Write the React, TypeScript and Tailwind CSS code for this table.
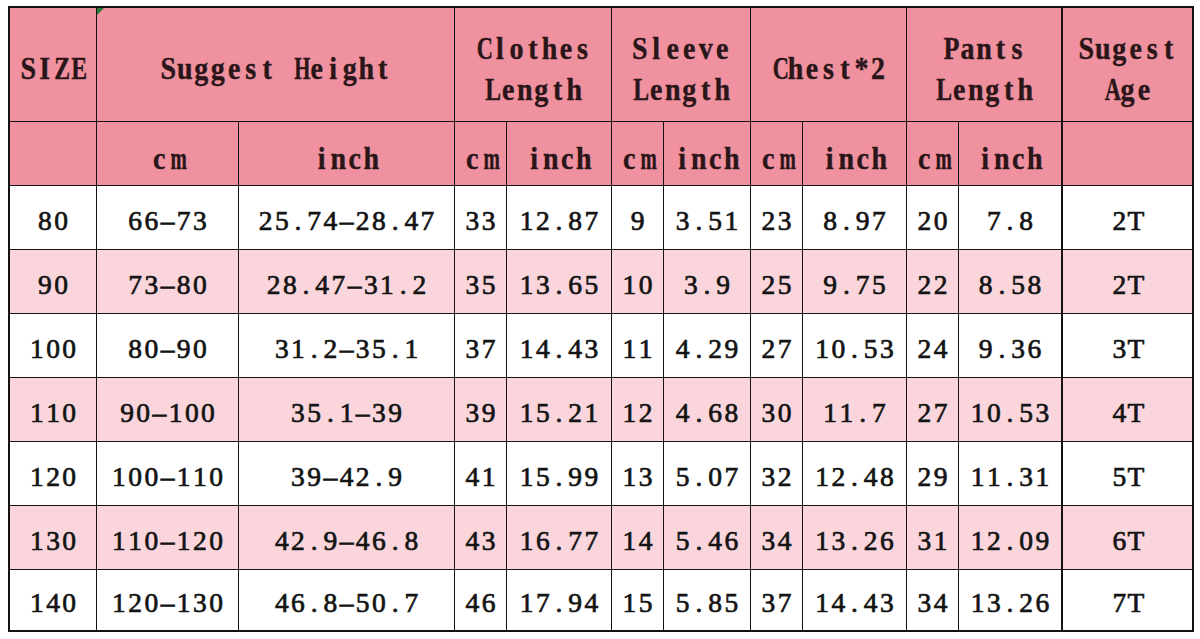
import React from "react";

const rows: string[][] = [
  ["80", "66-73", "25.74-28.47", "33", "12.87", "9", "3.51", "23", "8.97", "20", "7.8", "2T"],
  ["90", "73-80", "28.47-31.2", "35", "13.65", "10", "3.9", "25", "9.75", "22", "8.58", "2T"],
  ["100", "80-90", "31.2-35.1", "37", "14.43", "11", "4.29", "27", "10.53", "24", "9.36", "3T"],
  ["110", "90-100", "35.1-39", "39", "15.21", "12", "4.68", "30", "11.7", "27", "10.53", "4T"],
  ["120", "100-110", "39-42.9", "41", "15.99", "13", "5.07", "32", "12.48", "29", "11.31", "5T"],
  ["130", "110-120", "42.9-46.8", "43", "16.77", "14", "5.46", "34", "13.26", "31", "12.09", "6T"],
  ["140", "120-130", "46.8-50.7", "46", "17.94", "15", "5.85", "37", "14.43", "34", "13.26", "7T"],
];

const squeeze: Record<string, string> = {
  H: "scale-x-[0.74]",
  C: "scale-x-[0.8]",
  L: "scale-x-[0.85]",
  P: "scale-x-[0.93]",
  A: "scale-x-[0.8]",
  Z: "scale-x-[0.85]",
  E: "scale-x-[0.85]",
  m: "scale-x-[0.7]",
};

function Mono({ text, cell, squeezeWide }: { text: string; cell: string; squeezeWide?: boolean }) {
  return (
    <span className="inline-flex">
      {text.split("").map((c, i) => (
        <span
          key={i}
          className={`inline-block text-center ${cell} ${squeezeWide && squeeze[c] ? squeeze[c] : ""}`}
        >
          {c === "-" ? "\u2013" : c === " " ? "\u00a0" : c}
        </span>
      ))}
    </span>
  );
}

function HeadText({ lines }: { lines: string[] }) {
  return (
    <div className="flex flex-col items-center leading-[37px] scale-y-[1.1]">
      {lines.map((l, i) => (
        <Mono key={i} text={l} cell="w-[16.5px]" squeezeWide />
      ))}
    </div>
  );
}

const headBase =
  "bg-[#ef919e] flex items-center justify-center text-[#2a1619] font-bold text-[28px] [font-family:'Liberation_Serif',serif] [-webkit-text-stroke:0.35px_#2a1619]";

export default function App() {
  return (
    <div className="w-[1200px] h-[639px] bg-white overflow-hidden">
      <div className="ml-[8px] mt-[6px] w-fit bg-[#161213] p-[2px] grid gap-px grid-cols-[86px_141px_215px_51px_104px_51px_86px_51px_103px_51px_102px_130px] grid-rows-[113px_63px_63px_63px_63px_63px_63px_63px_60px]">
        {/* header row 1 */}
        <div className={`${headBase} pt-[8px]`}>
          <HeadText lines={["SIZE"]} />
        </div>
        <div className={`${headBase} pt-[8px] col-span-2 relative`}>
          <span className="absolute left-0 top-0 w-0 h-0 border-t-[7px] border-r-[7px] border-t-[#237a3b] border-r-transparent" />
          <HeadText lines={["Suggest Height"]} />
        </div>
        <div className={`${headBase} pt-[8px] col-span-2`}>
          <HeadText lines={["Clothes", "Length"]} />
        </div>
        <div className={`${headBase} pt-[8px] col-span-2`}>
          <HeadText lines={["Sleeve", "Length"]} />
        </div>
        <div className={`${headBase} pt-[8px] col-span-2`}>
          <HeadText lines={["Chest*2"]} />
        </div>
        <div className={`${headBase} pt-[8px] col-span-2`}>
          <HeadText lines={["Pants", "Length"]} />
        </div>
        <div className={`${headBase} pt-[8px] border-l border-[#161213]`}>
          <HeadText lines={["Sugest", "Age"]} />
        </div>

        {/* header row 2 */}
        <div className={headBase} />
        {["cm", "inch", "cm", "inch", "cm", "inch", "cm", "inch", "cm", "inch"].map((t, i) => (
          <div key={i} className={`${headBase} pt-[10px]`}>
            <HeadText lines={[t]} />
          </div>
        ))}
        <div className={`${headBase} border-l border-[#161213]`} />

        {/* data rows */}
        {rows.map((r, ri) =>
          r.map((v, ci) => (
            <div
              key={`${ri}-${ci}`}
              className={`flex items-center justify-center pt-[6px] text-[27.5px] text-[#141414] [font-family:'Liberation_Serif',serif] [-webkit-text-stroke:0.7px_#141414] ${
                ri % 2 === 1 ? "bg-[#fad6dc]" : "bg-white"
              } ${ci === 11 ? "border-l border-[#161213]" : ""}`}
            >
              <Mono text={v} cell="w-[16.2px]" />
            </div>
          ))
        )}
      </div>
    </div>
  );
}
